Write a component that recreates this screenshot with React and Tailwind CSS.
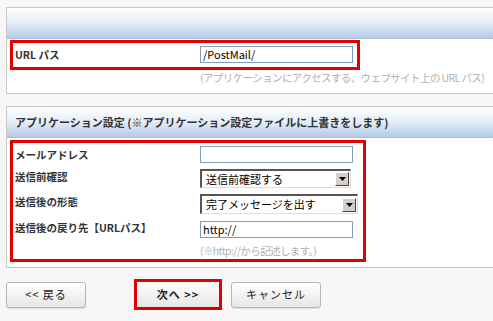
import React from 'react';

const font = { fontFamily: '"Noto Sans CJK JP", "Liberation Sans", sans-serif' };

const Header = ({ children }) => (
  <div className="h-[31px] bg-gradient-to-b from-white via-[#e4edf7] to-[#b3cae6] border-b border-[#a9c1de] flex items-center pl-[8px] text-[11px] font-bold text-[#333] whitespace-nowrap">
    {children}
  </div>
);

const TextInput = ({ value = '', className = '' }) => (
  <div className={`w-[153px] h-[17px] border border-[#7f9db9] bg-white text-[11px] leading-[15px] pl-[2px] text-black ${className}`}>
    {value}
  </div>
);

const Select = ({ value, width, height }) => (
  <div
    className="flex items-center bg-white border-t-2 border-l-2 border-[#555] border-b border-r border-b-[#ddd] border-r-[#ddd] text-[11px] text-black"
    style={{ width, height }}
  >
    <span className="flex-1 pl-[4px] whitespace-nowrap">{value}</span>
    <span className="w-[14px] h-[14px] mr-[1px] bg-[#d4d0c8] border border-t-white border-l-white border-b-[#404040] border-r-[#404040] flex items-center justify-center">
      <svg width="7" height="4" viewBox="0 0 7 4"><path d="M0 0h7L3.5 4z" fill="#000" /></svg>
    </span>
  </div>
);

const Label = ({ children }) => (
  <div className="w-[187px] pl-[2px] text-[10.5px] font-bold text-[#333] leading-[14px] whitespace-nowrap">{children}</div>
);

const Hint = ({ children, className = '' }) => (
  <div className={`text-[10.5px] text-[#b0b0b0] leading-[14px] whitespace-nowrap tracking-[-0.6px] ${className}`}>
    {children}
  </div>
);

const Button = ({ children, className = '' }) => (
  <div className={`h-[26px] rounded-[3px] border border-[#b5b5b5] bg-gradient-to-b from-white to-[#e6e6e6] flex items-center justify-center text-[11px] text-[#222] tracking-[1px] shadow-[0_1px_1px_rgba(0,0,0,0.1)] ${className}`}>
    {children}
  </div>
);

export default function App() {
  return (
    <div className="w-[493px] h-[321px] bg-[#f7f7f7] pt-[7px] pl-[6px] overflow-hidden" style={font}>
      <div className="bg-white border-l border-t border-b border-[#c8c8c8] h-[87px]">
        <Header />
        <div className="ml-[3px] mt-[1px] w-[350px] h-[30px] border-[3px] border-[#e30000] flex items-center">
          <Label>URL パス</Label>
          <TextInput value="/PostMail/" className="-mt-[1px]" />
        </div>
        <Hint className="ml-[193px] mt-[1px]">
          (アプリケーションにアクセスする、ウェブサイト上の URL パス)
        </Hint>
      </div>

      <div className="mt-[12px] bg-white border-l border-t border-b border-[#c8c8c8] h-[162px]">
        <Header>アプリケーション設定 (※アプリケーション設定ファイルに上書きをします)</Header>
        <div className="ml-[3px] mt-[2px] w-[356px] h-[122px] border-[3px] border-[#e30000] pt-[3px]">
          <div className="flex items-start">
            <div className="pt-[2px]"><Label>メールアドレス</Label></div>
            <TextInput />
          </div>
          <div className="flex items-start mt-[6px]">
            <div className="pt-[1px]"><Label>送信前確認</Label></div>
            <Select value="送信前確認する" width={151} height={19} />
          </div>
          <div className="flex items-start mt-[6px]">
            <div className="pt-[1px]"><Label>送信後の形態</Label></div>
            <Select value="完了メッセージを出す" width={158} height={20} />
          </div>
          <div className="flex items-start mt-[7px]">
            <div><Label>送信後の戻り先【URLパス】</Label></div>
            <TextInput value="http://" />
          </div>
          <Hint className="ml-[187px] mt-[6px]">
            (※http://から記述します。)
          </Hint>
        </div>
      </div>

      <div className="flex items-center mt-[11px]">
        <Button className="w-[80px]">&lt;&lt; 戻る</Button>
        <div className="ml-[48px] w-[88px] h-[31px] border-[3px] border-[#e30000] flex">
          <Button className="flex-1 h-full rounded-none border-0 font-bold">次へ &gt;&gt;</Button>
        </div>
        <Button className="ml-[9px] w-[90px]">キャンセル</Button>
      </div>
    </div>
  );
}
